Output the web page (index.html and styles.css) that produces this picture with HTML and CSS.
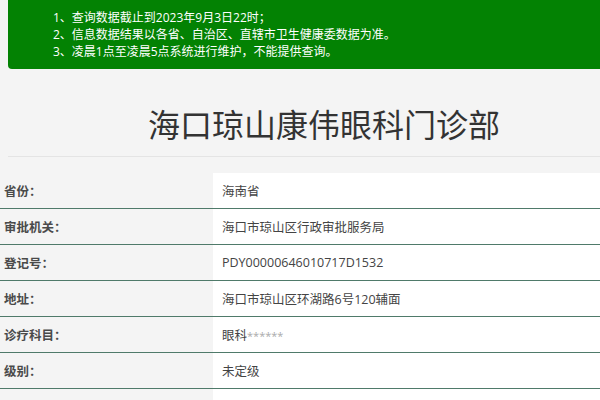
FILE: index.html
```html
<!DOCTYPE html>
<html lang="zh-CN">
<head>
<meta charset="utf-8">
<title>海口琼山康伟眼科门诊部</title>
<link rel="stylesheet" href="styles.css">
</head>
<body>
<div class="notice">
  <ol class="notice-list">
    <li>1、查询数据截止到2023年9月3日22时；</li>
    <li>2、信息数据结果以各省、自治区、直辖市卫生健康委数据为准。</li>
    <li>3、凌晨1点至凌晨5点系统进行维护，不能提供查询。</li>
  </ol>
</div>
<h1 class="title">海口琼山康伟眼科门诊部</h1>
<div class="info">
  <div class="row"><div class="label">省份：</div><div class="value">海南省</div></div>
  <div class="row"><div class="label">审批机关：</div><div class="value">海口市琼山区行政审批服务局</div></div>
  <div class="row"><div class="label">登记号：</div><div class="value">PDY00000646010717D1532</div></div>
  <div class="row"><div class="label">地址：</div><div class="value">海口市琼山区环湖路6号120辅面</div></div>
  <div class="row"><div class="label">诊疗科目：</div><div class="value">眼科<span class="mask">******</span></div></div>
  <div class="row"><div class="label">级别：</div><div class="value">未定级</div></div>
  <div class="row"><div class="label"></div><div class="value"></div></div>
</div>
</body>
</html>
```
FILE: styles.css
```css
html, body {
  margin: 0;
  padding: 0;
}
body {
  background: #f4f4f4;
  font-family: "Open Sans", "Noto Sans CJK SC", sans-serif;
  color: #333;
  height: 400px;
  overflow: hidden;
}
.notice {
  margin-left: 8px;
  height: 69px;
  box-sizing: border-box;
  background: #038203;
  border-radius: 0 0 0 4px;
  padding: 8.5px 0 0 45px;
  color: #fff;
}
.notice-list {
  margin: 0;
  padding: 0;
  list-style: none;
  font-size: 12px;
  line-height: 17px;
}
.title {
  margin: 34px 0 0 8px;
  padding: 0 0 13px 0;
  border-bottom: 1px solid #e4e4e4;
  font-family: "Noto Sans CJK SC", sans-serif;
  font-weight: 400;
  font-size: 32px;
  line-height: 40px;
  color: #333;
  text-indent: 140px;
}
.info {
  margin-top: 16px;
  font-size: 12.5px;
}
.row {
  display: grid;
  grid-template-columns: 213px 1fr;
  height: 36px;
  box-sizing: border-box;
  border-bottom: 1px solid #4f7a6a;
}
.label {
  background: #f4f4f4;
  padding-left: 4px;
  font-weight: 700;
  color: #4a4a4a;
  display: flex;
  align-items: center;
}
.value {
  background: #fff;
  padding-left: 9px;
  color: #444;
  display: flex;
  align-items: center;
}
.mask {
  color: #aaa;
  font-size: 11px;
  align-self: flex-start;
  margin-top: 11px;
}
```
